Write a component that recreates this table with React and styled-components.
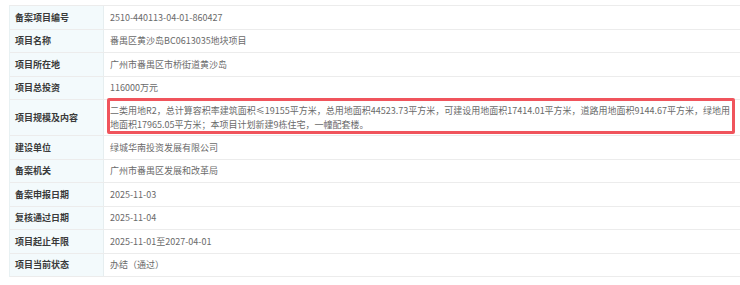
import React from 'react';
import styled, { createGlobalStyle } from 'styled-components';

const rows = [
  { label: '备案项目编号', value: '2510-440113-04-01-860427' },
  { label: '项目名称', value: '番禺区黄沙岛BC0613035地块项目' },
  { label: '项目所在地', value: '广州市番禺区市桥街道黄沙岛' },
  { label: '项目总投资', value: '116000万元' },
  {
    label: '项目规模及内容',
    value:
      '二类用地R2，总计算容积率建筑面积≤19155平方米，总用地面积44523.73平方米，可建设用地面积17414.01平方米，道路用地面积9144.67平方米，绿地用地面积17965.05平方米；本项目计划新建9栋住宅，一幢配套楼。',
    marked: true,
  },
  { label: '建设单位', value: '绿城华南投资发展有限公司' },
  { label: '备案机关', value: '广州市番禺区发展和改革局' },
  { label: '备案申报日期', value: '2025-11-03' },
  { label: '复核通过日期', value: '2025-11-04' },
  { label: '项目起止年限', value: '2025-11-01至2027-04-01' },
  { label: '项目当前状态', value: '办结（通过）' },
];

const App = () => (
  <>
    <GlobalStyle />
    <Page>
      <Table>
        {rows.map((row) => (
          <Row key={row.label} tall={row.marked}>
            <Label>{row.label}</Label>
            <Value>
              {row.value}
              {row.marked && <Highlight />}
            </Value>
          </Row>
        ))}
      </Table>
    </Page>
  </>
);

export default App;

const GlobalStyle = createGlobalStyle`
  html, body {
    margin: 0;
    background: #fff;
    overflow: hidden;
  }
  body {
    font-family: "Noto Sans CJK SC", "Noto Sans", sans-serif;
  }
`;

const Page = styled.div`
  width: 740px;
  height: 285px;
  padding: 5px 0 0 9px;
  box-sizing: border-box;
  overflow: hidden;
`;

const Table = styled.div`
  width: 760px;
  border-top: 1px solid #ececec;
  border-left: 1px solid #e8f1f3;
`;

const Row = styled.div`
  display: grid;
  grid-template-columns: 94px 1fr;
  min-height: ${({ tall }) => (tall ? '35px' : '22.5px')};
  border-bottom: 1px solid #ececec;
`;

const Label = styled.div`
  display: flex;
  align-items: center;
  padding-left: 5px;
  background: #f3fafc;
  border-right: 1px solid #e6eef0;
  font-size: 9px;
  font-weight: 700;
  color: #3a3a3a;
`;

const Value = styled.div`
  position: relative;
  display: flex;
  align-items: center;
  padding: 4px 37px 4px 6px;
  font-size: 9px;
  line-height: 13.5px;
  color: #6a6a6a;
`;

const Highlight = styled.div`
  position: absolute;
  top: -2px;
  left: 3px;
  width: 628px;
  height: 36px;
  box-sizing: border-box;
  border: 3px solid #f0545c;
  border-radius: 2px;
  pointer-events: none;
`;
